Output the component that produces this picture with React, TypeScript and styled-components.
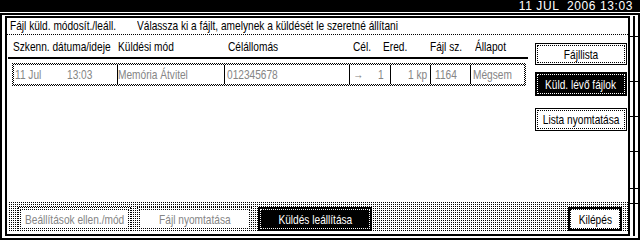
import React from 'react';
import styled, {createGlobalStyle, css} from 'styled-components';

const GlobalStyle = createGlobalStyle`
    html, body {
        margin: 0;
        padding: 0;
        background: #fff;
    }
`;

// 25% dot screen, like the panel's greyed strip
const dither = css`
    background-color: #fff;
    background-image: conic-gradient(at 1px 1px, #fff 0 75%, #000 0);
    background-size: 2px 2px;
`;

// 50% checker, used for the selected row outline
const checker = css`
    background-color: #fff;
    background-image: conic-gradient(at 1px 1px, #fff 0 25%, #000 0 50%, #fff 0 75%, #000 0);
    background-size: 2px 2px;
`;

const Screen = styled.div`
    width: 640px;
    height: 240px;
    display: flex;
    flex-direction: column;
    overflow: hidden;
    background: #fff;
    color: #000;
    font-family: 'Liberation Sans', Arial, sans-serif;
    font-size: 13px;
`;

const TopBar = styled.div`
    flex: none;
    height: 12px;
    background: #000;
    color: #fff;
    display: flex;
    justify-content: flex-end;
    align-items: center;
    padding-right: 7px;
    font-size: 12px;
    line-height: 12px;
    letter-spacing: 0.6px;
    white-space: pre;
`;

const Frame = styled.div`
    flex: 1;
    min-height: 0;
    margin-top: 1px;
    display: flex;
    border: 2px solid #000;
    padding: 1px 0 2px 3px;
`;

const Panel = styled.div`
    flex: 1;
    min-width: 0;
    display: flex;
    flex-direction: column;
    border: 2px solid #000;
`;

const Rail = styled.div`
    flex: none;
    width: 8px;
    display: flex;
    flex-direction: column;
    background: linear-gradient(#000, #000) 3px 0 / 2px 100% no-repeat;
`;

const Tick = styled.div<{$gap: number}>`
    margin-top: ${p => p.$gap}px;
    height: 1px;
    background: #000;
`;

const Txt = styled.span<{$origin?: string}>`
    display: inline-block;
    white-space: pre;
    transform: scaleX(0.78);
    transform-origin: ${p => p.$origin ?? 'left'} center;
`;

const TitleRow = styled.div`
    flex: none;
    height: 16px;
    display: flex;
    align-items: flex-start;
    border-bottom: 1px dotted #000;
    line-height: 15px;
`;

const Title = styled.div`
    width: 127px;
    padding-left: 3px;
`;

const Body = styled.div`
    flex: 1;
    min-height: 0;
    display: flex;
`;

const TableArea = styled.div`
    width: 521px;
    flex: none;
`;

const HeadRow = styled.div`
    display: grid;
    grid-template-columns: 105px 110px 125px 30px 47px 45px 1fr;
    box-sizing: border-box;
    height: 22px;
    padding-top: 4px;
    margin-left: 6px;
    line-height: 15px;
`;

const Rule = styled.div`
    height: 2px;
    width: 520px;
    margin-left: 1px;
    background: #000;
`;

const DataRow = styled.div`
    ${checker};
    box-sizing: border-box;
    width: 514px;
    height: 23px;
    margin: 4px 0 0 5px;
    padding: 2px;
`;

const DataGrid = styled.div`
    height: 100%;
    display: grid;
    grid-template-columns: 103px 107px 125px 41px 40px 40px 54px;
    background: #fff;
    color: #858585;
    line-height: 19px;
`;

const Cell = styled.div<{$pad?: number; $split?: number; $rule?: boolean}>`
    box-sizing: border-box;
    padding-left: ${p => p.$pad ?? 0}px;
    border-left: ${p => (p.$rule ? '1px solid #000' : 'none')};
    display: ${p => (p.$split ? 'grid' : 'block')};
    grid-template-columns: ${p => (p.$split ? `${p.$split}px auto` : 'none')};
    overflow: hidden;
`;

const SideColumn = styled.div`
    flex: none;
    width: 92px;
    margin: 8px 0 0 7px;
    display: flex;
    flex-direction: column;
`;

type Kind = 'plain' | 'active' | 'disabled' | 'exit';

const Key = styled.div<{$kind: Kind; $w?: number; $h?: number; $gap?: number}>`
    position: relative;
    flex: none;
    box-sizing: border-box;
    width: ${p => p.$w ?? 92}px;
    height: ${p => p.$h ?? 23}px;
    margin-top: ${p => p.$gap ?? 0}px;
    display: flex;
    align-items: center;
    justify-content: center;
    background: ${p => (p.$kind === 'active' ? '#000' : '#fff')};
    color: ${p => (p.$kind === 'active' ? '#fff' : p.$kind === 'disabled' ? '#858585' : '#000')};
    border: ${p => (p.$kind === 'exit' ? '2px solid #000' : p.$kind === 'disabled' ? '1px dotted #000' : '1px solid #000')};

    &::after {
        content: '';
        position: absolute;
        inset: ${p => (p.$kind === 'exit' ? 0 : 1)}px;
        border: 1px dotted ${p => (p.$kind === 'active' ? '#fff' : '#000')};
        pointer-events: none;
    }
`;

const Strip = styled.div`
    ${dither};
    flex: none;
    height: 30px;
    box-sizing: border-box;
    margin: 0 0 2px 2px;
    padding: 5px 6px 1px 9px;
    display: flex;
    align-items: flex-start;
    gap: 6px;
`;

const Spacer = styled.div`
    flex: 1;
`;

const App = () => {
    return (
        <>
            <GlobalStyle/>
            <Screen>
                <TopBar>{'11 JUL  2006 13:03'}</TopBar>
                <Frame>
                    <Panel>
                        <TitleRow>
                            <Title><Txt>{'Fájl küld. módosít./leáll.'}</Txt></Title>
                            <Txt>{'Válassza ki a fájlt, amelynek a küldését le szeretné állítani'}</Txt>
                        </TitleRow>
                        <Body>
                            <TableArea>
                                <HeadRow>
                                    <Txt>{'Szkenn. dátuma/ideje'}</Txt>
                                    <Txt>{'Küldési mód'}</Txt>
                                    <Txt>{'Célállomás'}</Txt>
                                    <Txt>{'Cél.'}</Txt>
                                    <Txt>{'Ered.'}</Txt>
                                    <Txt>{'Fájl sz.'}</Txt>
                                    <Txt>{'Állapot'}</Txt>
                                </HeadRow>
                                <Rule/>
                                <DataRow>
                                    <DataGrid>
                                        <Cell $pad={1} $split={52}>
                                            <Txt>{'11 Jul'}</Txt>
                                            <Txt>{'13:03'}</Txt>
                                        </Cell>
                                        <Cell $rule={true}><Txt>{'Memória Átvitel'}</Txt></Cell>
                                        <Cell $rule={true} $pad={2}><Txt>{'012345678'}</Txt></Cell>
                                        <Cell $rule={true} $pad={3} $split={25}>
                                            <Txt>{'→'}</Txt>
                                            <Txt>{'1'}</Txt>
                                        </Cell>
                                        <Cell $rule={true} $pad={17}><Txt>{'1 kp'}</Txt></Cell>
                                        <Cell $rule={true} $pad={4}><Txt>{'1164'}</Txt></Cell>
                                        <Cell $rule={true} $pad={2}><Txt>{'Mégsem'}</Txt></Cell>
                                    </DataGrid>
                                </DataRow>
                            </TableArea>
                            <SideColumn>
                                <Key $kind='plain' $h={22}><Txt $origin='center'>{'Fájllista'}</Txt></Key>
                                <Key $kind='active' $h={24} $gap={7}><Txt $origin='center'>{'Küld. lévő fájlok'}</Txt></Key>
                                <Key $kind='plain' $gap={12}><Txt $origin='center'>{'Lista nyomtatása'}</Txt></Key>
                            </SideColumn>
                        </Body>
                        <Strip>
                            <Key $kind='disabled' $w={113} $h={24}><Txt $origin='center'>{'Beállítások ellen./mód'}</Txt></Key>
                            <Key $kind='disabled' $w={115} $h={24}><Txt $origin='center'>{'Fájl nyomtatása'}</Txt></Key>
                            <Key $kind='active' $w={114} $h={24}><Txt $origin='center'>{'Küldés leállítása'}</Txt></Key>
                            <Spacer/>
                            <Key $kind='exit' $w={54} $h={24}><Txt $origin='center'>{'Kilépés'}</Txt></Key>
                        </Strip>
                    </Panel>
                    <Rail>
                        <Tick $gap={20}/>
                        <Tick $gap={44}/>
                        <Tick $gap={34}/>
                        <Tick $gap={34}/>
                        <Tick $gap={36}/>
                        <Tick $gap={14}/>
                    </Rail>
                </Frame>
            </Screen>
        </>
    );
};

export default App;
